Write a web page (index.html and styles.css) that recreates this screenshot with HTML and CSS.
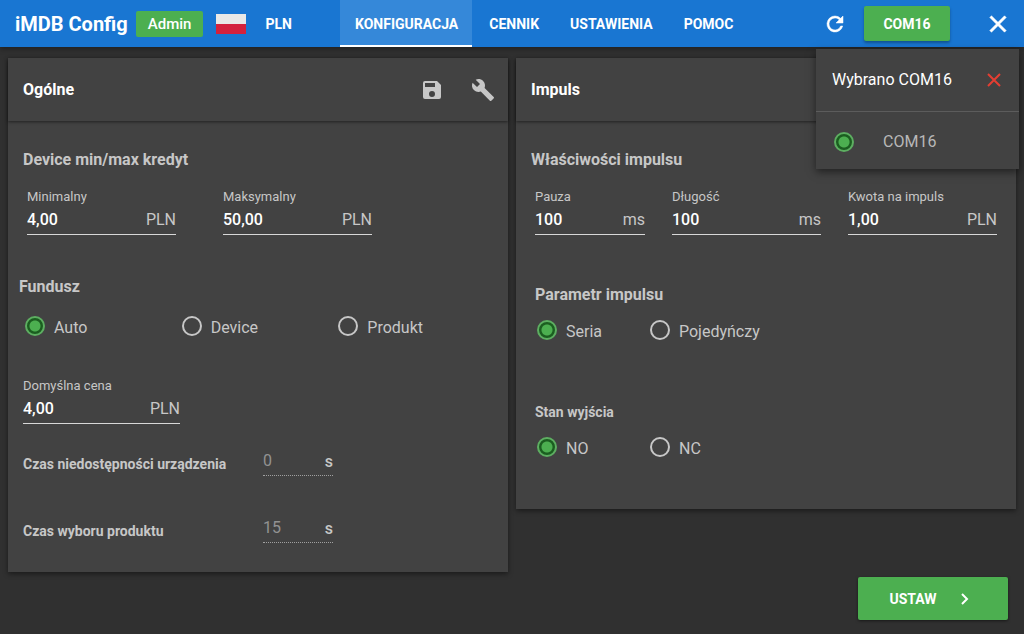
FILE: index.html
```html
<!DOCTYPE html>
<html lang="pl">
<head>
<meta charset="utf-8">
<meta name="viewport" content="width=device-width, initial-scale=1">
<title>iMDB Config</title>
<link rel="stylesheet" href="styles.css">
</head>
<body>
<header class="topbar">
  <div class="brand">
    <h1 class="brand-name">iMDB Config</h1>
    <span class="badge">Admin</span>
    <svg class="flag" viewBox="0 0 30 20" role="img" aria-label="Polski"><path fill="#e9e8e7" d="M0 0h30v10H0z"/><path fill="#d4213d" d="M0 10h30v10H0z"/></svg>
    <span class="currency">PLN</span>
  </div>
  <nav class="tabs">
    <a class="tab tab-active" href="#konfiguracja" aria-current="page">KONFIGURACJA</a>
    <a class="tab" href="#cennik">CENNIK</a>
    <a class="tab" href="#ustawienia">USTAWIENIA</a>
    <a class="tab" href="#pomoc">POMOC</a>
  </nav>
  <div class="actions">
    <button class="icon-button" type="button" aria-label="Odśwież"><svg class="icon icon-refresh" viewBox="0 0 24 24"><path d="M17.65 6.35A7.96 7.96 0 0 0 12 4a8 8 0 1 0 7.73 10h-2.08A6 6 0 1 1 12 6c1.66 0 3.14.69 4.22 1.78L13 11h7V4z"/></svg></button>
    <button class="port-button" type="button" aria-expanded="true">COM16</button>
    <button class="icon-button" type="button" aria-label="Zamknij"><svg class="icon icon-close" viewBox="0 0 24 24"><path d="M19 6.41 17.59 5 12 10.59 6.41 5 5 6.41 10.59 12 5 17.59 6.41 19 12 13.41 17.59 19 19 17.59 13.41 12z"/></svg></button>
  </div>
  <section class="port-menu" aria-label="Port">
    <div class="port-menu-head">
      <span>Wybrano COM16</span>
      <button class="icon-button" type="button" aria-label="Rozłącz"><svg class="icon-disconnect" viewBox="0 0 14 14"><path d="M1 1l12 12M13 1 1 13"/></svg></button>
    </div>
    <label class="port-option"><input class="radio" type="radio" name="port" checked><span>COM16</span></label>
  </section>
</header>

<main class="page">
  <div class="cards">
    <section class="card">
      <header class="card-head">
        <h2 class="card-title">Ogólne</h2>
        <div class="card-tools">
          <button class="icon-button" type="button" aria-label="Zapisz"><svg class="icon" viewBox="0 0 24 24"><path d="M17 3H5a2 2 0 0 0-2 2v14a2 2 0 0 0 2 2h14a2 2 0 0 0 2-2V7zm-5 16a3 3 0 1 1 0-6 3 3 0 0 1 0 6zm3-10H5V5h10z"/></svg></button>
          <button class="icon-button" type="button" aria-label="Narzędzia"><svg class="icon" viewBox="0 0 24 24"><path d="m22.7 19-9.1-9.1c.9-2.3.4-5-1.5-6.9-2-2-5-2.4-7.4-1.3L9 6 6 9 1.6 4.7C.4 7.1.9 10.1 2.9 12.1c1.9 1.9 4.6 2.4 6.9 1.500l9.1 9.1c.4.4 1 .4 1.4 0l2.3-2.3c.5-.4.5-1.1.1-1.4z"/></svg></button>
        </div>
      </header>
      <div class="card-body">
        <h3 class="heading">Device min/max kredyt</h3>
        <div class="fields fields-credit">
          <div class="field"><label class="field-label" for="min">Minimalny</label><div class="field-line"><input class="field-input" id="min" value="4,00"><span>PLN</span></div></div>
          <div class="field"><label class="field-label" for="max">Maksymalny</label><div class="field-line"><input class="field-input" id="max" value="50,00"><span>PLN</span></div></div>
        </div>
        <fieldset class="group group-fund">
          <legend class="heading">Fundusz</legend>
          <div class="radios radios-wide">
            <label class="option"><input class="radio" type="radio" name="fund" checked><span class="option-text">Auto</span></label>
            <label class="option"><input class="radio" type="radio" name="fund"><span class="option-text">Device</span></label>
            <label class="option"><input class="radio" type="radio" name="fund"><span class="option-text">Produkt</span></label>
          </div>
        </fieldset>
        <div class="field field-price"><label class="field-label" for="price">Domyślna cena</label><div class="field-line"><input class="field-input" id="price" value="4,00"><span>PLN</span></div></div>
        <div class="times">
          <div class="time"><label class="subheading time-label" for="down">Czas niedostępności urządzenia</label><div class="time-line"><input class="time-input" id="down" value="0" disabled><span>s</span></div></div>
          <div class="time"><label class="subheading time-label" for="pick">Czas wyboru produktu</label><div class="time-line"><input class="time-input" id="pick" value="15" disabled><span>s</span></div></div>
        </div>
      </div>
    </section>

    <section class="card">
      <header class="card-head"><h2 class="card-title">Impuls</h2></header>
      <div class="card-body">
        <h3 class="heading">Właściwości impulsu</h3>
        <div class="fields fields-impulse">
          <div class="field"><label class="field-label" for="pause">Pauza</label><div class="field-line"><input class="field-input" id="pause" value="100"><span>ms</span></div></div>
          <div class="field"><label class="field-label" for="length">Długość</label><div class="field-line"><input class="field-input" id="length" value="100"><span>ms</span></div></div>
          <div class="field"><label class="field-label" for="amount">Kwota na impuls</label><div class="field-line"><input class="field-input" id="amount" value="1,00"><span>PLN</span></div></div>
        </div>
        <fieldset class="group group-impulse">
          <legend class="heading">Parametr impulsu</legend>
          <div class="radios radios-narrow">
            <label class="option"><input class="radio" type="radio" name="mode" checked><span class="option-text">Seria</span></label>
            <label class="option"><input class="radio" type="radio" name="mode"><span class="option-text">Pojedyńczy</span></label>
          </div>
        </fieldset>
        <fieldset class="group group-output">
          <legend class="subheading">Stan wyjścia</legend>
          <div class="radios radios-narrow">
            <label class="option"><input class="radio" type="radio" name="out" checked><span class="option-text">NO</span></label>
            <label class="option"><input class="radio" type="radio" name="out"><span class="option-text">NC</span></label>
          </div>
        </fieldset>
      </div>
    </section>
  </div>
  <footer class="footer">
    <button class="submit" type="button">USTAW<svg class="icon-next" viewBox="0 0 8 12"><path d="M1 1l5 5-5 5"/></svg></button>
  </footer>
</main>
</body>
</html>
```
FILE: styles.css
```css
* { box-sizing: border-box; }

body {
  margin: 0;
  background: #303030;
  color: #c7c7c7;
  font: 400 16px/24px Roboto, "Noto Sans", sans-serif;
}

button, input { font: inherit; color: inherit; }
button { border: 0; cursor: pointer; }
h1, h2, h3 { margin: 0; }
fieldset { border: 0; margin: 0; padding: 0; min-width: 0; }
legend { padding: 0; }

.icon { width: 24px; height: 24px; fill: currentColor; display: block; }
.icon-button { display: flex; padding: 0; background: none; }

/* Top bar */
.topbar {
  position: relative;
  z-index: 1;
  display: grid;
  grid-template-columns: 340px auto 1fr;
  min-height: 47px;
  background: #1976d2;
  color: #fff;
  box-shadow: 0 2px 5px rgba(0, 0, 0, .35);
}
.brand { display: flex; align-items: center; padding-left: 15px; }
.brand-name { font-size: 20px; line-height: 24px; font-weight: 700; white-space: nowrap; }
.badge {
  margin-left: 8px;
  padding: 0 12px;
  border-radius: 2px;
  background: #4caf50;
  font-size: 15px;
  line-height: 26px;
  font-weight: 500;
}
.flag { width: 30px; height: 20px; margin-left: 13px; }
.currency { margin-left: 19px; font-size: 14px; font-weight: 700; }
.tabs { display: flex; gap: 2px; }
.tab {
  display: flex;
  align-items: center;
  padding: 2px 14px 0 15px;
  border-bottom: 2px solid transparent;
  color: #fff;
  font-size: 14px;
  font-weight: 700;
  text-decoration: none;
}
.tab-active { background: #3588d9; border-color: #fff; }
.actions { display: flex; align-items: center; justify-content: flex-end; padding-right: 12px; }
.port-button {
  width: 86px;
  height: 35px;
  margin: 0 34px 0 17px;
  padding: 0;
  border-radius: 2px;
  background: #4caf50;
  font-size: 14px;
  font-weight: 700;
  box-shadow: 0 2px 3px rgba(0, 0, 0, .3);
}
.icon-refresh { stroke: currentColor; stroke-width: .5px; }
.icon-close { width: 28px; height: 28px; stroke: currentColor; stroke-width: .5px; }

/* Port menu */
.port-menu {
  position: absolute;
  top: 49px;
  right: 5px;
  width: 203px;
  background: #424242;
  box-shadow: 0 3px 8px rgba(0, 0, 0, .5);
}
.port-menu-head {
  display: flex;
  align-items: center;
  justify-content: space-between;
  padding: 19px 18px 19px 16px;
  border-bottom: 1px solid #5c5c5c;
}
.icon-disconnect { width: 14px; height: 14px; fill: none; stroke: #e53e32; stroke-width: 2px; }
.port-option {
  display: flex;
  align-items: center;
  gap: 29px;
  padding: 18px 18px 15px;
  color: #b8b8b8;
}

/* Cards */
.page { padding: 11px 8px 14px; }
.cards { display: grid; grid-template-columns: 1fr 1fr; gap: 8px; align-items: start; }
.card { background: #424242; box-shadow: 0 2px 5px rgba(0, 0, 0, .45); }
.card-head {
  display: flex;
  align-items: center;
  justify-content: space-between;
  min-height: 63px;
  padding: 0 13px 0 15px;
  box-shadow: 0 1px 3px rgba(0, 0, 0, .5);
}
.card-title { color: #fff; font-size: 16px; font-weight: 700; }
.card-tools { display: flex; gap: 27px; color: #c7c7c7; }
.card-body { padding: 27px 15px 29px; }
.heading { font-size: 16px; line-height: 24px; font-weight: 700; }
.subheading { font-size: 14px; line-height: 20px; font-weight: 700; }

/* Text fields */
.fields { display: grid; margin-top: 15px; padding: 0 4px; }
.fields-credit { grid-template-columns: repeat(2, minmax(0, 149px)); gap: 47px; }
.fields-impulse { grid-template-columns: 110fr 149fr 149fr; gap: 27px; }
.field { min-width: 0; }
.field-label { display: block; font-size: 13px; line-height: 20px; }
.field-line {
  display: flex;
  align-items: center;
  padding: 1px 0 2px;
  border-bottom: 1px solid #d8d8d8;
}
.field-input {
  flex: 1;
  width: 0;
  min-width: 0;
  height: 24px;
  padding: 0 0 1px;
  border: 0;
  background: none;
  color: #fff;
  font-weight: 500;
}
.field-price { max-width: 157px; margin-top: 38px; }

/* Radio groups */
.group-fund { margin: 40px -4px 0; }
.group-impulse { margin-top: 48px; padding-left: 4px; }
.group-output { margin-top: 60px; padding: 0 0 21px 4px; }
.radios { display: grid; padding-top: 13px; }
.radios-wide { grid-template-columns: repeat(3, 1fr); padding: 17px 2px 0 6px; }
.radios-narrow { grid-template-columns: 113px auto; justify-content: start; padding-left: 2px; }
.option { display: flex; align-items: flex-start; gap: 9px; }
.option-text { padding-top: 2px; line-height: 20px; }
.group-output .radios { padding-top: 15px; }
.radio {
  appearance: none;
  flex: none;
  width: 20px;
  height: 20px;
  margin: 0;
  border: 2px solid #c7c7c7;
  border-radius: 50%;
}
.radio:checked {
  border-color: #5dae61;
  background: radial-gradient(circle, #4caf50 5px, #1b5e20 6px);
}

/* Times */
.times { display: grid; gap: 39px; margin-top: 24px; }
.time { display: grid; grid-template-columns: 240px 70px; align-items: end; }
.time-label { padding-bottom: 2px; }
.time-line {
  display: flex;
  align-items: center;
  padding: 2px 0 1px;
  border-bottom: 1px dotted #a0a0a0;
  font-weight: 500;
}
.time-input {
  flex: 1;
  width: 0;
  min-width: 0;
  height: 24px;
  padding: 0 0 3px;
  border: 0;
  background: none;
  color: #929292;
  font-weight: 400;
}

/* Footer */
.footer { display: flex; justify-content: flex-end; padding: 5px 8px 0; }
.submit {
  display: flex;
  align-items: center;
  justify-content: center;
  gap: 24px;
  min-width: 150px;
  height: 43px;
  padding: 0 8px 0 0;
  border-radius: 2px;
  background: #4caf50;
  color: #fff;
  font-size: 14px;
  font-weight: 700;
  box-shadow: 0 1px 3px rgba(0, 0, 0, .5);
}
.icon-next { width: 8px; height: 12px; fill: none; stroke: currentColor; stroke-width: 2px; }
```
